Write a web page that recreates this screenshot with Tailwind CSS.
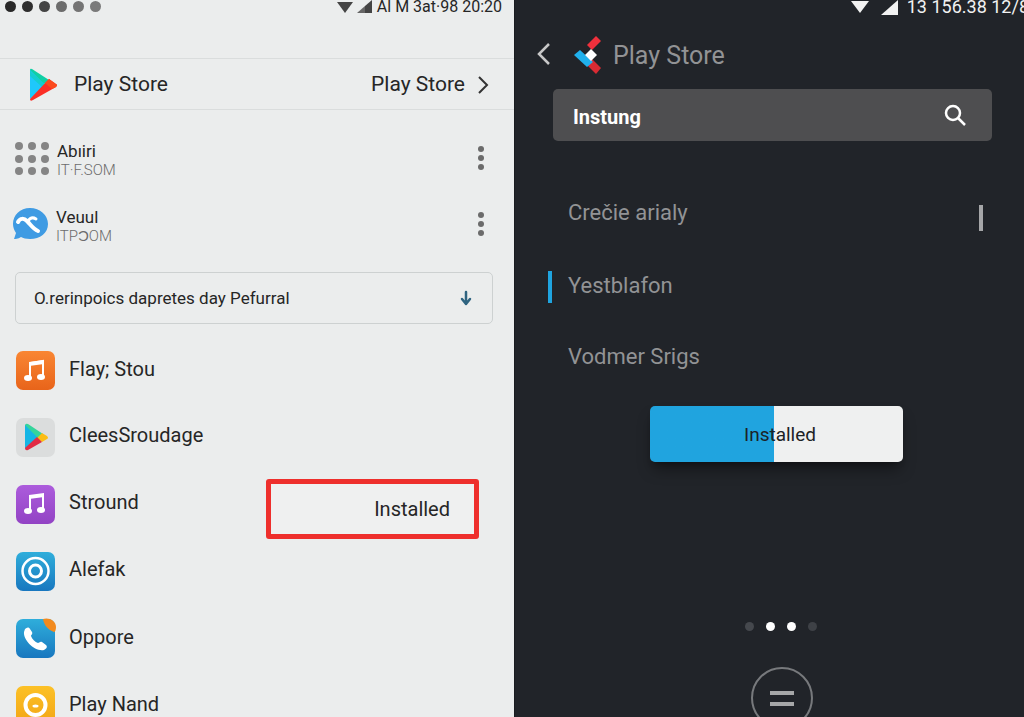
<!DOCTYPE html>
<html lang="en">
<head>
<meta charset="utf-8">
<meta name="viewport" content="width=device-width, initial-scale=1">
<title>Play Store</title>
<script src="https://cdn.jsdelivr.net/npm/@tailwindcss/browser@4"></script>
</head>
<body class="grid h-screen grid-cols-[514fr_510fr] overflow-hidden font-['Roboto',sans-serif]">

<!-- Light panel -->
<main class="min-w-0 bg-[#ebeded] text-[#262626]">
  <div class="flex h-[58px] items-start justify-between pr-3 pl-[5px]">
    <div class="flex gap-[6px] pt-[1px]" aria-hidden="true">
      <span class="size-[11px] rounded-full bg-[#282828]"></span>
      <span class="size-[11px] rounded-full bg-[#2e2e2e]"></span>
      <span class="size-[11px] rounded-full bg-[#444444]"></span>
      <span class="size-[11px] rounded-full bg-[#6c6c6c]"></span>
      <span class="size-[11px] rounded-full bg-[#747474]"></span>
      <span class="size-[11px] rounded-full bg-[#7a7a7a]"></span>
    </div>
    <div class="flex h-[13px] items-center gap-1">
      <svg class="h-3 w-4" viewBox="0 0 16 12" fill="#444" aria-hidden="true"><path d="M0 1h16L8 12z"/></svg>
      <svg class="h-[14px] w-4" viewBox="0 0 16 14" aria-hidden="true"><path d="M0 13L8 6v7z" fill="#666"/><path d="M8 6l7-6v13H8z" fill="#444"/></svg>
      <span class="text-base leading-[13px] whitespace-nowrap">Al M 3at·98 20:20</span>
    </div>
  </div>

  <header class="flex h-[52px] items-center border-y border-[#dadddd] pt-[2px] pr-[25px] pl-[29px] text-[21px]">
    <svg class="mr-[17px] h-[34px] w-7" viewBox="0 0 28 34" aria-hidden="true">
      <path d="M1 2Q1 0 3 1l17 11-7 6L1 5z" fill="#10cfa5"/>
      <path d="M1 2v29l16-13z" fill="#1fc8fb"/>
      <path d="M1 2l1 2 15 13-4 2L1 8z" fill="#14cdd0"/>
      <path d="M20 11l7 5q2 1 0 3L4 32q-3 2-3-1z" fill="#fb2f26"/>
      <path d="M20 11l7 5q2 1 0 3l-4 2-7-6z" fill="#fb4a1e"/>
    </svg>
    <h1>Play Store</h1>
    <a href="#" class="ml-auto flex items-center gap-3">Play Store
      <svg class="h-[18px] w-3" viewBox="0 0 12 18" fill="none" stroke="#333" stroke-width="2" aria-hidden="true"><path d="M2 1l8 8-8 8"/></svg>
    </a>
  </header>

  <ul class="pt-[15px]">
    <li class="flex h-[66px] items-center pr-7 pl-[14px]">
      <svg class="mr-2 size-[35px]" viewBox="0 0 35 35" fill="#858585" aria-hidden="true">
        <circle cx="5" cy="5" r="4"/><circle cx="18" cy="5" r="4"/><circle cx="31" cy="5" r="4"/>
        <circle cx="5" cy="18" r="4"/><circle cx="18" cy="18" r="4"/><circle cx="31" cy="18" r="4"/>
        <circle cx="5" cy="30" r="4"/><circle cx="18" cy="30" r="4"/><circle cx="31" cy="30" r="4"/>
      </svg>
      <div class="pt-[3px]"><p class="text-[17px] leading-5">Abıiri</p><p class="text-[15px] leading-[18px] font-light text-[#6c6c6c]">IT·F.SOM</p></div>
      <button class="ml-auto" aria-label="More options for Abıiri">
        <svg class="h-6 w-[10px]" viewBox="0 0 10 24" fill="#6b6b6b"><circle cx="5" cy="3" r="3"/><circle cx="5" cy="12" r="3"/><circle cx="5" cy="21" r="3"/></svg>
      </button>
    </li>
    <li class="flex h-[66px] items-center pr-7 pl-3">
      <svg class="mr-2 h-8 w-9" viewBox="0 0 36 32" aria-hidden="true">
        <path d="M18 0C28 0 36 7 36 16s-8 15-18 15c-4 0-7-1-9-2-3 2-6 2-7 2l2-6C2 22 1 19 1 16 1 7 8 0 18 0z" fill="#3f9be3"/>
        <path d="M6 14c2-4 6-4 9-1 4 4 6 8 11 10" fill="none" stroke="#fff" stroke-width="4" stroke-linecap="round"/>
        <path d="M16 13c2-3 5-4 8-2" fill="none" stroke="#fff" stroke-width="3" stroke-linecap="round"/>
      </svg>
      <div class="pt-[3px]"><p class="text-[17px] leading-5">Veuul</p><p class="text-[15px] leading-[18px] font-light text-[#6c6c6c]">ITPƆOM</p></div>
      <button class="ml-auto" aria-label="More options for Veuul">
        <svg class="h-6 w-[10px]" viewBox="0 0 10 24" fill="#6b6b6b"><circle cx="5" cy="3" r="3"/><circle cx="5" cy="12" r="3"/><circle cx="5" cy="21" r="3"/></svg>
      </button>
    </li>
  </ul>

  <button class="mx-[15px] mt-[15px] flex h-[52px] w-[calc(100%-36px)] items-center justify-between rounded-[5px] border border-[#cdd1d1] pt-[2px] pr-5 pl-[18px] text-[17px]">
    O.rerinpoics dapretes day Pefurral
    <svg class="mb-[2px] h-4 w-3" viewBox="0 0 12 16" fill="none" stroke="#2f6480" stroke-width="2.500" stroke-linecap="round" stroke-linejoin="round" aria-hidden="true"><path d="M6 2v12M2 9l4 5 4-5"/></svg>
  </button>

  <ul class="mt-[13px] text-xl">
    <li class="flex h-[67px] items-center gap-[14px] pl-4">
      <svg class="size-[39px]" viewBox="0 0 39 39" aria-hidden="true">
        <defs><linearGradient id="orange" x2="0" y2="1"><stop stop-color="#f98633"/><stop offset="1" stop-color="#e8641a"/></linearGradient></defs>
        <rect width="39" height="39" rx="7" fill="url(#orange)"/>
        <path d="M14 26V12l13-2v15" fill="none" stroke="#fff" stroke-width="2"/><path d="M13 11l15-2v4l-15 2z" fill="#fff"/>
        <ellipse cx="12" cy="27" rx="4" ry="3" fill="#fff"/><ellipse cx="25" cy="26" rx="4" ry="3" fill="#fff"/>
      </svg>
      <span class="pb-[3px]">Flay; Stou</span>
    </li>
    <li class="flex h-[67px] items-center gap-[14px] pl-4">
      <svg class="size-[39px]" viewBox="0 0 39 39" aria-hidden="true">
        <rect width="39" height="39" rx="7" fill="#dbdddd"/>
        <path d="M9 7q1-2 3-1l15 10-5 5L9 9z" fill="#35d49b"/>
        <path d="M9 7v24l13-11z" fill="#14b5e5"/>
        <path d="M26 15l5 3q2 2 0 3l-5 3-5-4z" fill="#fbbd14"/>
        <path d="M21 19l5 5-14 8q-3 1-3-2z" fill="#e22b45"/>
      </svg>
      <span class="pb-[5px]">CleesSroudage</span>
    </li>
    <li class="flex h-[67px] items-center gap-[14px] pr-[35px] pl-4">
      <svg class="size-[39px]" viewBox="0 0 39 39" aria-hidden="true">
        <defs><linearGradient id="purple" x2="0" y2="1"><stop stop-color="#ac5cdc"/><stop offset="1" stop-color="#9243c4"/></linearGradient></defs>
        <rect width="39" height="39" rx="7" fill="url(#purple)"/>
        <path d="M14 26V12l13-2v15" fill="none" stroke="#fff" stroke-width="2"/><path d="M13 10l15-2v4l-15 2z" fill="#fff"/>
        <ellipse cx="12" cy="26" rx="4" ry="3" fill="#fff"/><ellipse cx="25" cy="25" rx="4" ry="3" fill="#fff"/>
      </svg>
      <span class="pb-[5px]">Stround</span>
      <button class="-mb-px ml-auto h-[60px] w-[213px] self-end rounded-[3px] border-[5px] border-[#ee2f2c] bg-[#eff0f0] pr-6 text-right">Installed</button>
    </li>
    <li class="flex h-[67px] items-center gap-[14px] pl-4">
      <svg class="size-[39px]" viewBox="0 0 39 39" aria-hidden="true">
        <defs><linearGradient id="blue" x2="0" y2="1"><stop stop-color="#2faedb"/><stop offset="1" stop-color="#1877bf"/></linearGradient></defs>
        <rect width="39" height="39" rx="7" fill="url(#blue)"/>
        <circle cx="19.500" cy="19" r="13" fill="none" stroke="#fff" stroke-width="2.500"/>
        <circle cx="19.500" cy="19" r="6" fill="none" stroke="#fff" stroke-width="3"/>
      </svg>
      <span class="pb-[5px]">Alefak</span>
    </li>
    <li class="flex h-[67px] items-center gap-[14px] pl-4">
      <svg class="size-[39px] overflow-visible" viewBox="0 0 39 39" aria-hidden="true">
        <rect width="39" height="39" rx="7" fill="url(#blue)"/>
        <path d="M27 0c5-2 13 1 13 8 0 3-1 5-2 5-6-2-10-7-11-13z" fill="#f28a1e"/>
        <path d="M9 10c2-2 4-2 5 0l2 3c1 2-1 3-1 4 1 3 4 6 7 7 1 0 2-2 4-1l4 3c2 2 0 4-2 5C19 33 7 21 8 13z" fill="#fff"/>
      </svg>
      <span class="pb-[3px]">Oppore</span>
    </li>
    <li class="flex h-[67px] items-center gap-[14px] pl-4">
      <svg class="size-[39px]" viewBox="0 0 39 39" aria-hidden="true">
        <defs><linearGradient id="yellow" x2="0" y2="1"><stop stop-color="#fcc127"/><stop offset="1" stop-color="#f2a516"/></linearGradient></defs>
        <rect width="39" height="39" rx="7" fill="url(#yellow)"/>
        <circle cx="19.500" cy="19" r="10" fill="none" stroke="#fff" stroke-width="4"/>
        <ellipse cx="19.500" cy="20" rx="3" ry="1.500" fill="#fff"/>
      </svg>
      <span class="pb-[3px]">Play Nand</span>
    </li>
  </ul>
</main>

<!-- Dark panel -->
<section class="min-w-0 overflow-hidden border-l border-[#191c20] bg-[#212429] text-[#929395]">
  <div class="flex h-[14px] items-center justify-end gap-[9px] text-lg leading-[14px] text-[#f2f2f2]">
    <svg class="h-[14px] w-[18px]" viewBox="0 0 18 14" fill="currentColor" aria-hidden="true"><path d="M0 1h18L9 13z"/></svg>
    <svg class="ml-[3px] h-[15px] w-[17px]" viewBox="0 0 17 15" fill="currentColor" aria-hidden="true"><path d="M0 15L17 0v15z"/></svg>
    <span class="-mr-[5px] whitespace-nowrap">13 156.38 12/8</span>
  </div>

  <header class="flex h-[75px] items-center pt-[9px] pl-[22px]">
    <button aria-label="Back">
      <svg class="mb-[5px] h-6 w-[14px]" viewBox="0 0 14 24" fill="none" stroke="#c8c8c8" stroke-width="2.500"><path d="M12 2L2 12l10 10"/></svg>
    </button>
    <svg class="mr-3 mb-[3px] ml-[23px] h-[38px] w-[27px]" viewBox="0 0 27 38" aria-hidden="true">
      <path d="M13 9L22 0l5 5-9 9z" fill="#f0303c"/>
      <path d="M12 28l6-5 9 9-5 6z" fill="#d92b33"/>
      <path d="M0 19l6-5 13 12-6 5z" fill="#20b0ec"/>
      <path d="M11 19l6-6 6 6-6 6z" fill="#fff"/>
    </svg>
    <h2 class="text-[25px]">Play Store</h2>
  </header>

  <form class="mr-8 ml-[38px] flex h-[52px] items-center justify-between rounded-[5px] bg-[#4e4e50] pr-[25px] pl-5 text-white">
    <input type="text" value="Instung" aria-label="Search" class="min-w-0 flex-1 bg-transparent pt-1 text-xl font-bold outline-none">
    <button type="button" aria-label="Search">
      <svg class="size-[23px]" viewBox="0 0 23 23" fill="none" stroke="#fff" stroke-width="2.500"><circle cx="9" cy="9" r="7"/><path d="M14 14l7 7"/></svg>
    </button>
  </form>

  <nav class="mr-[41px] ml-[33px] pt-[34px] text-[22px]">
    <a href="#" class="flex h-[74px] items-center justify-between pl-5">Crečie arialy<span class="mt-[11px] h-[26px] w-1 bg-[#a5a6a8]"></span></a>
    <a href="#" class="flex h-[72px] items-center gap-4"><span class="mt-[3px] h-8 w-1 bg-[#1fa4df]"></span>Yestblafon</a>
    <a href="#" class="flex h-[70px] items-center pl-5">Vodmer Srigs</a>
  </nav>

  <!-- Lower controls share one centre line -->
  <div class="flex flex-col items-center pt-[15px] pl-[13px]">
    <button class="flex h-[56px] w-[253px] items-center justify-center rounded-[5px] bg-linear-to-r from-[#20a4df] from-49% to-[#eff0f0] to-49% pt-[2px] pl-2 text-[19px] text-[#1c2226] shadow-lg shadow-black/40">Installed</button>

    <div class="mt-[160px] flex gap-3 pl-[10px]" aria-hidden="true">
      <span class="size-[9px] rounded-full bg-[#45484d]"></span>
      <span class="size-[9px] rounded-full bg-white"></span>
      <span class="size-[9px] rounded-full bg-white"></span>
      <span class="size-[9px] rounded-full bg-[#3e4146]"></span>
    </div>

    <button class="mt-9 ml-3 flex size-[62px] shrink-0 flex-col items-center justify-center gap-[7px] rounded-full border-2 border-[#77797c]" aria-label="Menu">
      <span class="h-1 w-6 bg-[#a6a7a8]"></span>
      <span class="h-1 w-6 bg-[#a6a7a8]"></span>
    </button>
  </div>
</section>
</body>
</html>
